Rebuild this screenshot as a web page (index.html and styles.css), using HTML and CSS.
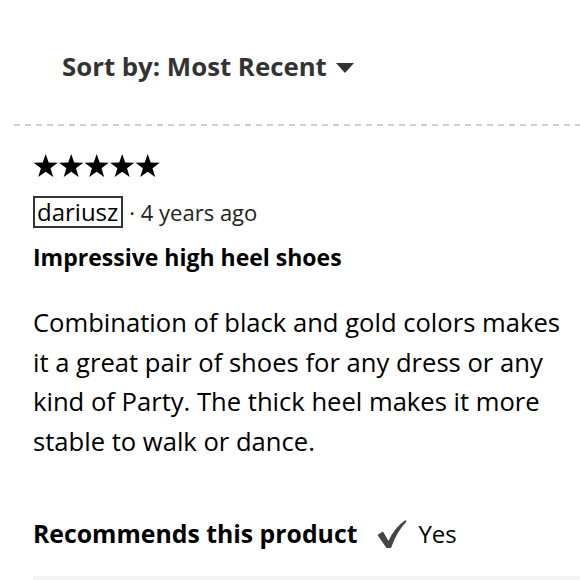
FILE: index.html
```html
<!DOCTYPE html>
<html>
<head>
<meta charset="utf-8">
<link rel="stylesheet" href="styles.css">
</head>
<body>
<div class="sort">
  <span class="sort-label">Sort by: Most Recent</span>
  <svg class="caret" width="18" height="10" viewBox="0 0 18 10"><polygon points="0,0 18,0 9,10" fill="#333"/></svg>
</div>
<div class="divider"></div>
<div class="review">
  <div class="stars">
    <svg width="128" height="24" viewBox="0 0 128 24">
      <defs><polygon id="st" points="12.7,0 15.7,8.6 24.8,8.7 17.5,14.2 20.2,23 12.7,17.7 5.2,23 7.9,14.2 0.6,8.7 9.7,8.6"/></defs>
      <use href="#st" x="0" fill="#000"/>
      <use href="#st" x="25.5" fill="#000"/>
      <use href="#st" x="51" fill="#000"/>
      <use href="#st" x="76.5" fill="#000"/>
      <use href="#st" x="102" fill="#000"/>
    </svg>
  </div>
  <div class="meta"><span class="author">dariusz</span><span class="ago">· 4 years ago</span></div>
  <div class="title">Impressive high heel shoes</div>
  <p class="body">Combination of black and gold colors makes it a great pair of shoes for any dress or any kind of Party. The thick heel makes it more stable to walk or dance.</p>
  <div class="rec">
    <span class="rec-label">Recommends this product</span>
    <svg class="check" width="30" height="30" viewBox="0 0 30 30"><path d="M0.5,16 L6,12.5 L11.5,22 Q17,9 28.5,1 L29.5,2.5 Q19.5,13 14,29 L9.5,29 Z" fill="#444"/></svg>
    <span class="yes">Yes</span>
  </div>
  <div class="bar"></div>
</div>
</body>
</html>
```
FILE: styles.css
```css
html, body {
  margin: 0;
  padding: 0;
  background: #fff;
}
body {
  font-family: "Open Sans", "Noto Sans", sans-serif;
  color: #000;
  width: 580px;
  height: 580px;
  overflow: hidden;
}
.sort {
  display: flex;
  align-items: center;
  padding: 48px 0 0 62px;
  height: 36px;
}
.sort-label {
  font-size: 25.8px;
  font-weight: 700;
  color: #333;
}
.caret {
  margin-left: 9px;
  margin-top: 4px;
}
.divider {
  margin: 40px 0 0 14px;
  height: 2px;
  background: repeating-linear-gradient(to right, #cfcfcf 0 6px, transparent 6px 11px);
}
.review {
  padding: 28px 0 0 33px;
}
.stars {
  height: 24px;
  display: flex;
}
.meta {
  margin-top: 18px;
  display: flex;
  align-items: center;
  font-size: 24px;
  height: 32px;
}
.author {
  border: 2px solid #333;
  padding: 0 3px 0 2px;
  line-height: 28px;
}
.ago {
  margin-left: 6px;
  color: #222;
  font-size: 22px;
}
.title {
  margin-top: 14px;
  font-size: 23px;
  font-weight: 700;
  line-height: 30px;
}
.body {
  margin: 31px 0 0;
  font-size: 25.6px;
  line-height: 39.5px;
  padding-right: 10px;
}
.rec {
  margin-top: 56px;
  display: flex;
  align-items: center;
  height: 32px;
}
.rec-label {
  font-size: 24.8px;
  font-weight: 700;
}
.check {
  margin-left: 20px;
  margin-top: 2px;
}
.yes {
  margin-left: 11px;
  font-size: 24px;
}
.bar {
  margin-top: 27px;
  height: 4px;
  background: #f3f3f3;
}
```
